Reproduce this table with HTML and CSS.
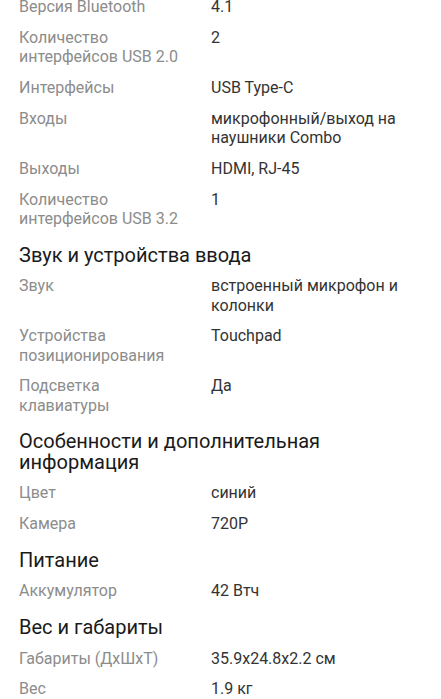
FILE: index.html
```html
<!DOCTYPE html>
<html lang="ru">
<head>
<meta charset="utf-8">
<link rel="stylesheet" href="styles.css">
</head>
<body>
<div class="page">
  <section class="section">
    <dl class="specs">
      <dt>Версия Bluetooth</dt><dd>4.1</dd>
      <dt>Количество интерфейсов USB 2.0</dt><dd>2</dd>
      <dt>Интерфейсы</dt><dd>USB Type-C</dd>
      <dt>Входы</dt><dd>микрофонный/выход на наушники Combo</dd>
      <dt>Выходы</dt><dd>HDMI, RJ-45</dd>
      <dt>Количество интерфейсов USB 3.2</dt><dd>1</dd>
    </dl>
  </section>
  <section class="section">
    <h2 class="title">Звук и устройства ввода</h2>
    <dl class="specs">
      <dt>Звук</dt><dd>встроенный микрофон и колонки</dd>
      <dt>Устройства позиционирования</dt><dd>Touchpad</dd>
      <dt>Подсветка клавиатуры</dt><dd>Да</dd>
    </dl>
  </section>
  <section class="section">
    <h2 class="title">Особенности и дополнительная информация</h2>
    <dl class="specs">
      <dt>Цвет</dt><dd>синий</dd>
      <dt>Камера</dt><dd>720P</dd>
    </dl>
  </section>
  <section class="section">
    <h2 class="title">Питание</h2>
    <dl class="specs">
      <dt>Аккумулятор</dt><dd>42 Втч</dd>
    </dl>
  </section>
  <section class="section">
    <h2 class="title">Вес и габариты</h2>
    <dl class="specs">
      <dt>Габариты (ДхШхТ)</dt><dd>35.9x24.8x2.2 см</dd>
      <dt>Вес</dt><dd>1.9 кг</dd>
    </dl>
  </section>
</div>
</body>
</html>
```

FILE: styles.css
```css
html, body {
  margin: 0;
  padding: 0;
  background: #ffffff;
}
body {
  font-family: Roboto, "Noto Sans", sans-serif;
  overflow: hidden;
}
.page {
  margin-top: -2.6px;
  padding: 0 19px;
}
.section {
  display: flow-root;
}
.title {
  margin: 0 0 11px;
  padding-top: 5px;
  font-size: 20px;
  line-height: 20.5px;
  font-weight: 400;
  color: #1a1a1a;
}
.specs {
  display: grid;
  grid-template-columns: 162px 1fr;
  column-gap: 30px;
  row-gap: 11.6px;
  margin: 0 0 11.6px;
  font-size: 16px;
  line-height: 19.2px;
}
.specs dt {
  color: #8c8c8c;
}
.specs dd {
  margin: 0;
  color: #333333;
}
```
